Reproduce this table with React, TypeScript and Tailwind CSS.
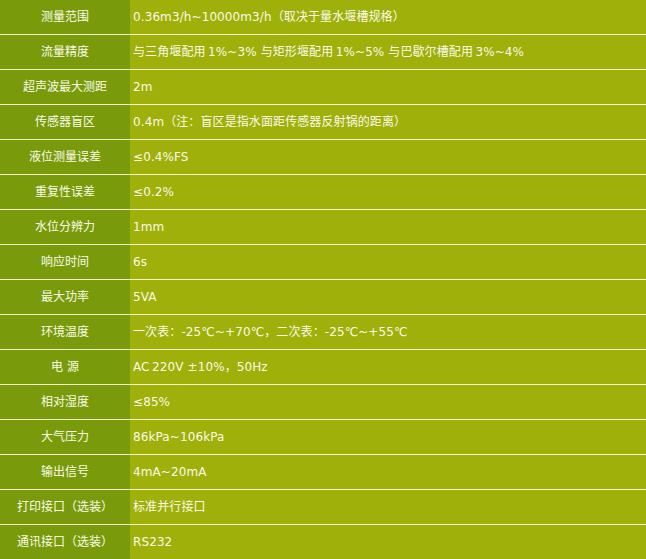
import React from "react";

const rows: [string, string][] = [
  ["测量范围", "0.36m3/h~10000m3/h（取决于量水堰槽规格）"],
  ["流量精度", "与三角堰配用 1%~3% 与矩形堰配用 1%~5% 与巴歇尔槽配用 3%~4%"],
  ["超声波最大测距", "2m"],
  ["传感器盲区", "0.4m（注：盲区是指水面距传感器反射锅的距离）"],
  ["液位测量误差", "≤0.4%FS"],
  ["重复性误差", "≤0.2%"],
  ["水位分辨力", "1mm"],
  ["响应时间", "6s"],
  ["最大功率", "5VA"],
  ["环境温度", "一次表：-25℃~+70℃，二次表：-25℃~+55℃"],
  ["电 源", "AC 220V ±10%，50Hz"],
  ["相对湿度", "≤85%"],
  ["大气压力", "86kPa~106kPa"],
  ["输出信号", "4mA~20mA"],
  ["打印接口（选装）", "标准并行接口"],
  ["通讯接口（选装）", "RS232"],
];

export default function App() {
  return (
    <div
      className="w-[646px] h-[559px] overflow-hidden flex flex-col text-[12px] leading-none text-[#fafae6]"
      style={{ fontFamily: '"DejaVu Sans", "Noto Sans CJK SC", sans-serif' }}
    >
      {rows.map(([k, v], i) => (
        <div
          key={i}
          className={
            i < rows.length - 1
              ? "flex h-[35px] shrink-0 border-b border-[#f2f2c6]"
              : "flex h-[34px] shrink-0"
          }
        >
          <div className="w-[130px] shrink-0 bg-[#799a0b] flex items-center justify-center">
            {k}
          </div>
          <div className="flex-1 bg-[#9fb00b] flex items-center pl-[3px] whitespace-nowrap tracking-[0.1px]">
            {v.replace(/ (\d)/g, "\u2009$1")}
          </div>
        </div>
      ))}
    </div>
  );
}
